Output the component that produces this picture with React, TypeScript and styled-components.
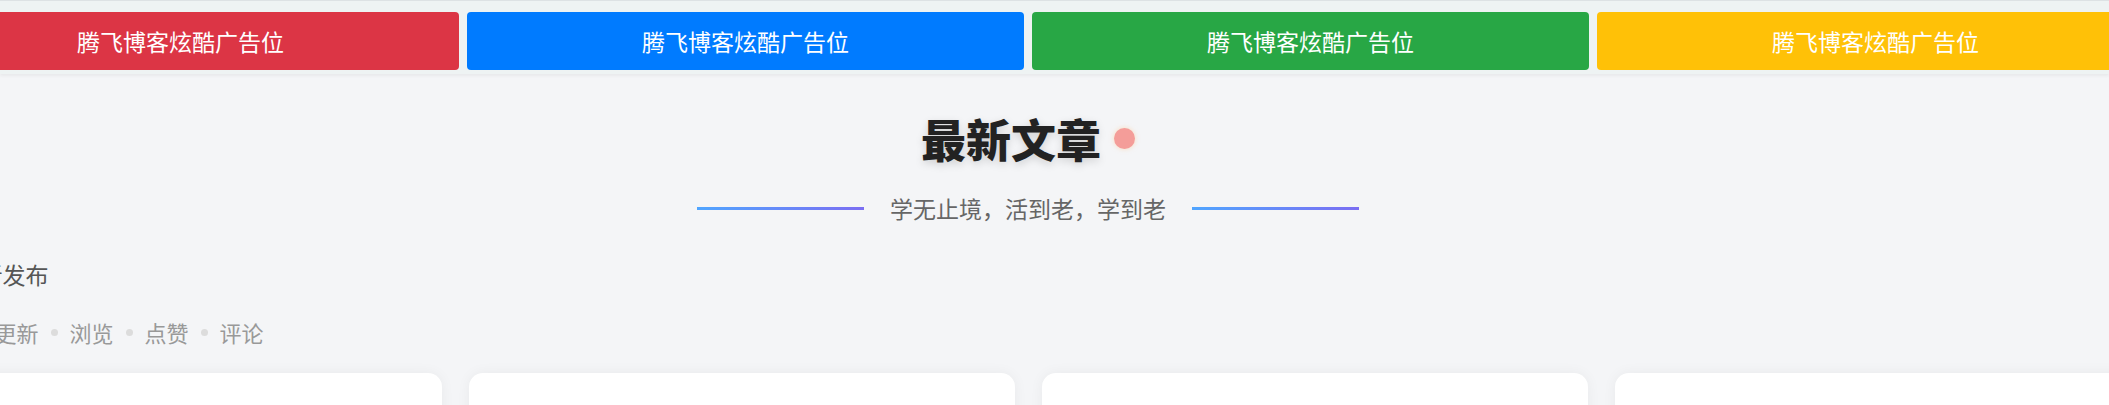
import React from 'react';
import styled, { createGlobalStyle } from 'styled-components';

const GlobalStyle = createGlobalStyle`
  html, body {
    margin: 0;
    padding: 0;
    background: #f4f5f7;
    overflow: hidden;
  }
  body {
    font-family: "Noto Sans CJK SC", "Noto Sans", sans-serif;
  }
`;

const ads = [
  { color: '#dc3545' },
  { color: '#007bff' },
  { color: '#28a745' },
  { color: '#ffc107' },
];

const tabs = ['最近更新', '浏览', '点赞', '评论'];

const App = () => {
  return (
    <>
      <GlobalStyle />
      <AdStrip>
        <AdRow>
          {ads.map((ad, i) => (
            <AdBanner key={i} $bg={ad.color}>
              腾飞博客炫酷广告位
            </AdBanner>
          ))}
        </AdRow>
      </AdStrip>

      <Page>
        <TitleRow>
          <Title>最新文章</Title>
          <TitleDot />
        </TitleRow>
        <SubtitleRow>
          <GradientLine />
          <Subtitle>学无止境，活到老，学到老</Subtitle>
          <GradientLine />
        </SubtitleRow>

        <Section>
          <SectionHead>
            <SectionTitle>最新发布</SectionTitle>
            <TabList>
              {tabs.map((t, i) => (
                <React.Fragment key={t}>
                  {i > 0 && <TabDot />}
                  <Tab>{t}</Tab>
                </React.Fragment>
              ))}
            </TabList>
          </SectionHead>
          <CardGrid>
            <Card />
            <Card />
            <Card />
            <Card />
          </CardGrid>
        </Section>
      </Page>
    </>
  );
};

export default App;

// the layout is centred a little left of the window middle (x = 1028)
const AdStrip = styled.div`
  display: flex;
  justify-content: center;
  width: 100%;
  height: 74px;
  box-sizing: border-box;
  padding: 11px 53px 0 0;
  border-top: 1px solid #dde2e4;
  background: #eef3f3;
  box-shadow: 0 2px 3px rgba(0, 0, 0, 0.05);
`;

const AdRow = styled.div`
  display: flex;
  gap: 8px;
  flex-shrink: 0;
`;

const AdBanner = styled.div<{ $bg: string }>`
  width: 557px;
  height: 58px;
  flex-shrink: 0;
  border-radius: 4px;
  background: ${(p) => p.$bg};
  color: #fff;
  font-size: 23px;
  display: flex;
  align-items: center;
  justify-content: center;
`;

const Page = styled.div`
  width: 100%;
  box-sizing: border-box;
  padding-right: 53px;
  display: flex;
  flex-direction: column;
  align-items: center;
`;

const TitleRow = styled.div`
  display: flex;
  align-items: center;
  gap: 13px;
  margin-top: 38px;
`;

const Title = styled.h2`
  margin: 0;
  font-size: 45px;
  line-height: 54px;
  font-weight: 900;
  color: #222;
  text-shadow: 0 3px 8px rgba(0, 0, 0, 0.15);
`;

const TitleDot = styled.span`
  width: 21px;
  height: 21px;
  border-radius: 50%;
  background: #f49d99;
  box-shadow: 0 0 5px rgba(255, 200, 150, 0.6);
  margin-top: -2px;
`;

const SubtitleRow = styled.div`
  display: flex;
  align-items: center;
  gap: 26px;
  margin-top: 25px;
`;

const GradientLine = styled.span`
  width: 167px;
  height: 3px;
  background: linear-gradient(90deg, #50a5ff, #7b6ef2);
`;

const Subtitle = styled.p`
  margin: 0;
  font-size: 23px;
  line-height: 34px;
  color: #666;
`;

const Section = styled.div`
  width: 2265px;
  flex-shrink: 0;
  display: flex;
  flex-direction: column;
  margin-top: 32px;
`;

const SectionHead = styled.div`
  display: flex;
  flex-direction: column;
  gap: 25px;
  padding-left: 61px;
`;

const SectionTitle = styled.h3`
  margin: 0;
  font-size: 23px;
  line-height: 34px;
  font-weight: 400;
  color: #555;
`;

const TabList = styled.div`
  display: flex;
  align-items: center;
  gap: 12px;
  margin-left: -6px;
`;

const Tab = styled.span`
  font-size: 22px;
  line-height: 33px;
  color: #999;
`;

const TabDot = styled.span`
  width: 7px;
  height: 7px;
  border-radius: 50%;
  background: #dcdcdc;
`;

const CardGrid = styled.div`
  display: grid;
  grid-template-columns: repeat(4, 546px);
  gap: 27px;
  margin-top: 24px;
`;

const Card = styled.div`
  height: 300px;
  background: #fff;
  border-radius: 14px;
  box-shadow: 0 0 14px rgba(0, 0, 0, 0.05);
`;
